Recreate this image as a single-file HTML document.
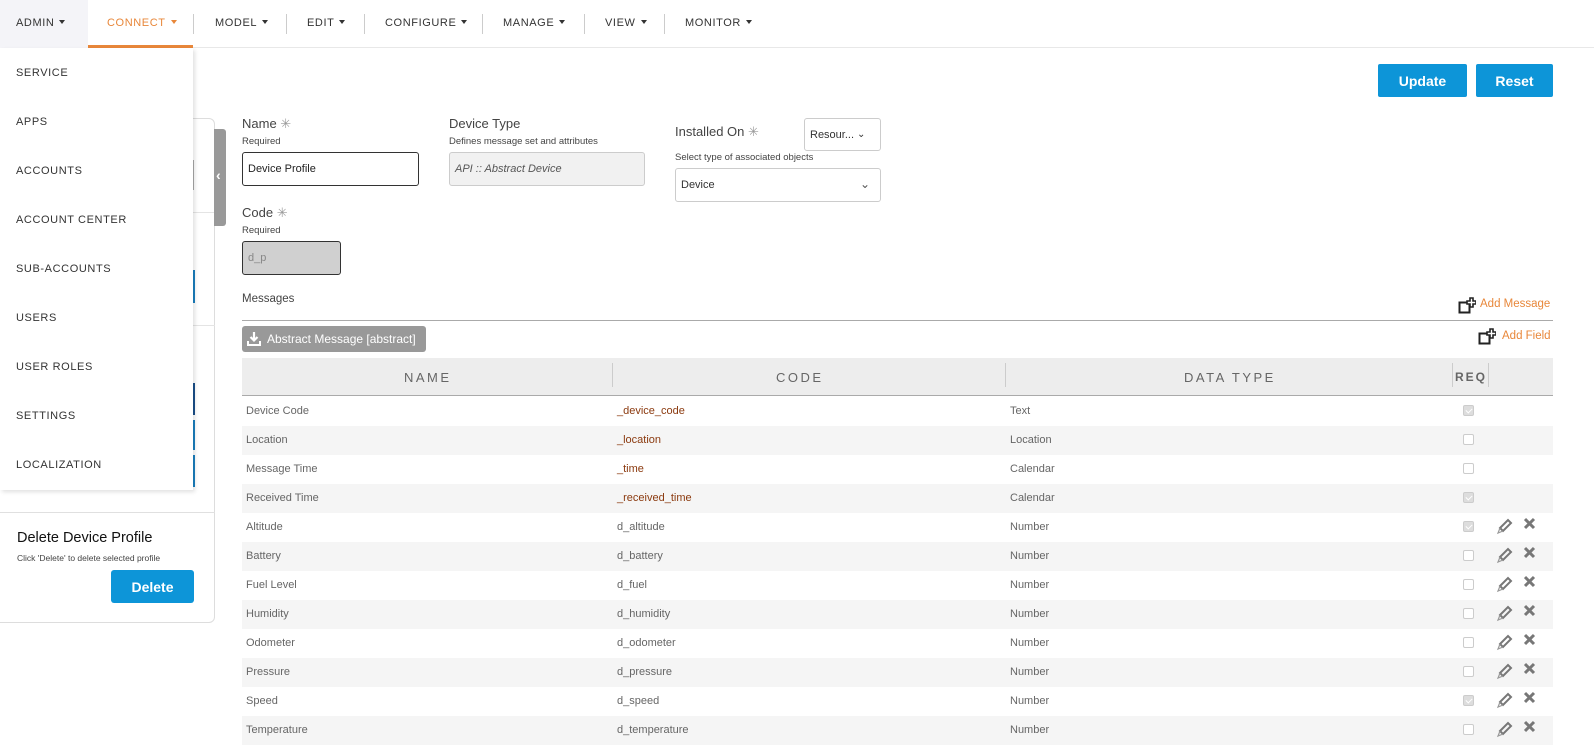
<!DOCTYPE html>
<html><head><meta charset="utf-8"><style>
*{box-sizing:border-box;margin:0;padding:0}
body{width:1594px;height:750px;overflow:hidden;background:#fff;font-family:"Liberation Sans",sans-serif;color:#333;position:relative}
.abs{position:absolute}
.nav{position:absolute;left:0;top:0;width:1594px;height:48px;border-bottom:1px solid #e8e8e8}
.nav span{position:absolute;top:17px;font-size:11px;letter-spacing:.6px;color:#333}
.sep{position:absolute;top:14px;width:1px;height:20px;background:#ccc}
.tri{display:inline-block;width:0;height:0;border-left:3.5px solid transparent;border-right:3.5px solid transparent;border-top:4px solid #333;vertical-align:2px;margin-left:5px}
.menu{position:absolute;left:0;top:48px;width:193px;height:442px;background:#fff;box-shadow:2px 2px 4px rgba(0,0,0,.12)}
.menu div{position:absolute;left:16px;font-size:11px;letter-spacing:.6px;color:#333}
.lbl{font-size:13px;color:#444}
.sm{font-size:9.5px;color:#444}
.inp{position:absolute;border:1px solid #ccc;border-radius:3px;font-size:11px;padding-left:5px;display:flex;align-items:center}
.btn{position:absolute;background:#0d95d8;color:#fff;font-weight:bold;font-size:14px;border-radius:2px;display:flex;align-items:center;justify-content:center}
.row{position:absolute;left:242px;width:1311px;height:29px;font-size:11px;color:#666}
.row span{position:absolute;top:8px}
.row .c{color:#8b3a0f}
.cb{position:absolute;left:1221px;top:8px;width:11px;height:11px;border:1px solid #ccc;border-radius:2px;background:#fff}
.cb.on{background:#ddd;border-color:#ccc}
.cb.on:after{content:"";position:absolute;left:3px;top:1px;width:3px;height:5px;border:solid #fff;border-width:0 1.5px 1.5px 0;transform:rotate(45deg)}
.hd{position:absolute;top:370px;font-size:13px;letter-spacing:2.5px;color:#666}
</style></head><body>
<div class="nav">
<div class="abs" style="left:0;top:0;width:88px;height:48px;background:#f4f4f8"></div>
<span style="left:16px">ADMIN<i class="tri"></i></span>
<span style="left:107px;color:#e8873a">CONNECT<i class="tri" style="border-top-color:#e8873a"></i></span>
<div class="abs" style="left:88px;top:45px;width:105px;height:3px;background:#e8873a"></div>
<div class="sep" style="left:193px"></div>
<span style="left:215px">MODEL<i class="tri"></i></span>
<div class="sep" style="left:286px"></div>
<span style="left:307px">EDIT<i class="tri"></i></span>
<div class="sep" style="left:364px"></div>
<span style="left:385px">CONFIGURE<i class="tri"></i></span>
<div class="sep" style="left:482px"></div>
<span style="left:503px">MANAGE<i class="tri"></i></span>
<div class="sep" style="left:584px"></div>
<span style="left:605px">VIEW<i class="tri"></i></span>
<div class="sep" style="left:664px"></div>
<span style="left:685px">MONITOR<i class="tri"></i></span>
</div>

<div class="abs" style="left:-10px;top:118px;width:225px;height:505px;border:1px solid #ddd;border-radius:6px"></div>
<div class="abs" style="left:150px;top:212px;width:65px;height:1px;background:#e4e4e4"></div>
<div class="abs" style="left:150px;top:325px;width:65px;height:1px;background:#e4e4e4"></div>
<div class="abs" style="left:0;top:512px;width:215px;height:1px;background:#e0e0e0"></div>
<div class="abs" style="left:193px;top:160px;width:1px;height:30px;background:#aaa"></div>
<div class="abs" style="left:193px;top:270px;width:1.5px;height:33px;background:#1a7fc0"></div>
<div class="abs" style="left:193px;top:383px;width:1.5px;height:32px;background:#1a4f8a"></div>
<div class="abs" style="left:193px;top:420px;width:1.5px;height:30px;background:#1a7fc0"></div>
<div class="abs" style="left:193px;top:455px;width:1.5px;height:32px;background:#1a7fc0"></div>
<div class="abs" style="left:214px;top:129px;width:12px;height:97px;background:#999;border-radius:0 3px 3px 0"></div>
<div class="abs" style="left:216px;top:167px;color:#fff;font-size:14px;font-weight:bold">‹</div>
<div class="abs" style="left:17px;top:530px;font-size:14.5px;color:#111">Delete Device Profile</div>
<div class="abs" style="left:17px;top:553px;font-size:8.5px;color:#444">Click 'Delete' to delete selected profile</div>
<div class="btn" style="left:111px;top:570px;width:83px;height:33px;border-radius:3px">Delete</div>

<div class="menu">
<div style="top:19px">SERVICE</div><div style="top:68px">APPS</div><div style="top:117px">ACCOUNTS</div>
<div style="top:166px">ACCOUNT CENTER</div><div style="top:215px">SUB-ACCOUNTS</div><div style="top:264px">USERS</div>
<div style="top:313px">USER ROLES</div><div style="top:362px">SETTINGS</div><div style="top:411px">LOCALIZATION</div>
</div>

<div class="btn" style="left:1378px;top:64px;width:89px;height:33px">Update</div>
<div class="btn" style="left:1476px;top:64px;width:77px;height:33px">Reset</div>

<div class="abs lbl" style="left:242px;top:116px">Name <span style="color:#999">✳</span></div>
<div class="abs sm" style="left:242px;top:136px">Required</div>
<div class="inp" style="left:242px;top:152px;width:177px;height:34px;border-color:#333;color:#222">Device Profile</div>
<div class="abs lbl" style="left:449px;top:116px">Device Type</div>
<div class="abs sm" style="left:449px;top:136px">Defines message set and attributes</div>
<div class="inp" style="left:449px;top:152px;width:196px;height:34px;background:#f1f1f1;font-style:italic;color:#555">API :: Abstract Device</div>
<div class="abs lbl" style="left:675px;top:124px">Installed On <span style="color:#999">✳</span></div>
<div class="inp" style="left:804px;top:118px;width:77px;height:33px;color:#333">Resour... <span style="margin-left:3px;font-size:10px">⌄</span></div>
<div class="abs sm" style="left:675px;top:152px">Select type of associated objects</div>
<div class="inp" style="left:675px;top:168px;width:206px;height:34px;color:#333">Device<span style="position:absolute;right:10px;top:8px;font-size:12px;color:#555">⌄</span></div>
<div class="abs lbl" style="left:242px;top:205px">Code <span style="color:#999">✳</span></div>
<div class="abs sm" style="left:242px;top:225px">Required</div>
<div class="inp" style="left:242px;top:241px;width:99px;height:34px;background:#d0d0d0;border-color:#333;color:#888">d_p</div>

<div class="abs" style="left:242px;top:293px;font-size:11.5px;color:#444">Messages</div>
<div class="abs" style="left:242px;top:320px;width:1311px;height:1px;background:#aaa"></div>
<svg class="abs" style="left:1458px;top:297px" width="18" height="18"><rect x="1.5" y="5.5" width="10" height="10" fill="#fff" stroke="#222" stroke-width="2"/><path d="M8 4h4V0h4v4h4" fill="none"/><path d="M9 4h3V1h3v3h3v3h-3v3h-3V7H9z" fill="#fff" stroke="#222" stroke-width="1.6"/></svg>
<div class="abs" style="left:1480px;top:298px;font-size:11.5px;color:#e8873a">Add Message</div>
<svg class="abs" style="left:1478px;top:328px" width="18" height="18"><rect x="1.5" y="5.5" width="10" height="10" fill="#fff" stroke="#222" stroke-width="2"/><path d="M9 4h3V1h3v3h3v3h-3v3h-3V7H9z" fill="#fff" stroke="#222" stroke-width="1.6"/></svg>
<div class="abs" style="left:1502px;top:330px;font-size:11.5px;color:#e8873a">Add Field</div>
<div class="abs" style="left:242px;top:326px;width:184px;height:26px;background:#999;border-radius:3px;color:#fff;font-size:12px;padding:6px 0 0 25px">Abstract Message [abstract]</div>
<svg class="abs" style="left:247px;top:331px" width="14" height="16"><path d="M7 1v8M3.5 6l3.5 3.5L10.5 6" fill="none" stroke="#fff" stroke-width="2.2"/><path d="M1 10v4h12v-4" fill="none" stroke="#fff" stroke-width="2"/></svg>

<div class="abs" style="left:242px;top:358px;width:1311px;height:38px;background:#ededed;border-bottom:1px solid #aaa"></div>
<div class="abs" style="left:612px;top:363px;width:1px;height:24px;background:#ccc"></div>
<div class="abs" style="left:1005px;top:363px;width:1px;height:24px;background:#ccc"></div>
<div class="abs" style="left:1452px;top:363px;width:1px;height:24px;background:#ccc"></div>
<div class="abs" style="left:1488px;top:363px;width:1px;height:24px;background:#ccc"></div>
<div class="hd" style="left:404px">NAME</div>
<div class="hd" style="left:776px">CODE</div>
<div class="hd" style="left:1184px">DATA TYPE</div>
<div class="hd" style="left:1455px;letter-spacing:2px;font-size:12px;font-weight:bold">REQ</div>

<div class="row" style="top:397px"><span style="left:4px">Device Code</span><span class="c" style="left:375px">_device_code</span><span style="left:768px">Text</span><i class="cb on"></i></div>
<div class="row" style="top:426px;background:#f5f5f5"><span style="left:4px">Location</span><span class="c" style="left:375px">_location</span><span style="left:768px">Location</span><i class="cb"></i></div>
<div class="row" style="top:455px"><span style="left:4px">Message Time</span><span class="c" style="left:375px">_time</span><span style="left:768px">Calendar</span><i class="cb"></i></div>
<div class="row" style="top:484px;background:#f5f5f5"><span style="left:4px">Received Time</span><span class="c" style="left:375px">_received_time</span><span style="left:768px">Calendar</span><i class="cb on"></i></div>
<div class="row" style="top:513px"><span style="left:4px">Altitude</span><span style="left:375px">d_altitude</span><span style="left:768px">Number</span><i class="cb on"></i></div>
<div class="row" style="top:542px;background:#f5f5f5"><span style="left:4px">Battery</span><span style="left:375px">d_battery</span><span style="left:768px">Number</span><i class="cb"></i></div>
<div class="row" style="top:571px"><span style="left:4px">Fuel Level</span><span style="left:375px">d_fuel</span><span style="left:768px">Number</span><i class="cb"></i></div>
<div class="row" style="top:600px;background:#f5f5f5"><span style="left:4px">Humidity</span><span style="left:375px">d_humidity</span><span style="left:768px">Number</span><i class="cb"></i></div>
<div class="row" style="top:629px"><span style="left:4px">Odometer</span><span style="left:375px">d_odometer</span><span style="left:768px">Number</span><i class="cb"></i></div>
<div class="row" style="top:658px;background:#f5f5f5"><span style="left:4px">Pressure</span><span style="left:375px">d_pressure</span><span style="left:768px">Number</span><i class="cb"></i></div>
<div class="row" style="top:687px"><span style="left:4px">Speed</span><span style="left:375px">d_speed</span><span style="left:768px">Number</span><i class="cb on"></i></div>
<div class="row" style="top:716px;background:#f5f5f5"><span style="left:4px">Temperature</span><span style="left:375px">d_temperature</span><span style="left:768px">Number</span><i class="cb"></i></div>

<svg class="abs" style="left:1490px;top:513px" width="60" height="232">
<defs><g id="ic"><path d="M10 15 L18 7 L21 10 L13 18 Z" fill="none" stroke="#777" stroke-width="2"/><path d="M10 15 L8 20 L13 18" fill="none" stroke="#999" stroke-width="1.2"/><path d="M35 6 L44 15 M44 6 L35 15" stroke="#777" stroke-width="3"/></g></defs>
<use href="#ic" y="0"/><use href="#ic" y="29"/><use href="#ic" y="58"/><use href="#ic" y="87"/><use href="#ic" y="116"/><use href="#ic" y="145"/><use href="#ic" y="174"/><use href="#ic" y="203"/>
</svg>
</body></html>
